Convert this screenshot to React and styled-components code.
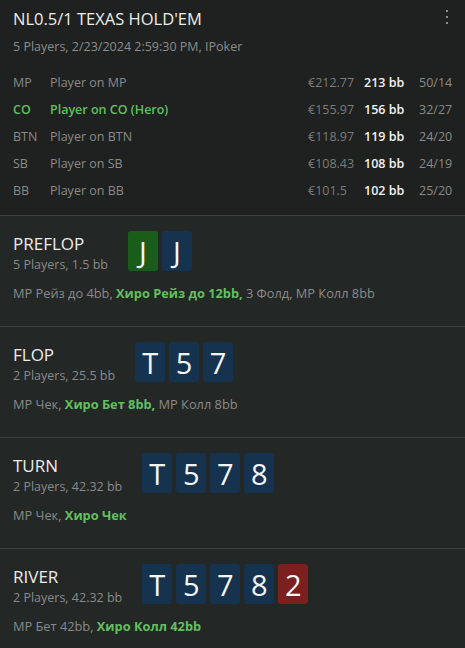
import React from 'react';
import styled, { createGlobalStyle } from 'styled-components';

const GlobalStyle = createGlobalStyle`
  html, body {
    margin: 0;
    padding: 0;
    background: #232726;
  }
  body {
    font-family: "Open Sans", "Noto Sans", sans-serif;
    -webkit-font-smoothing: antialiased;
  }
`;

const Page = styled.div`
  width: 465px;
  min-height: 648px;
  background: #232726;
  color: #8a8a8a;
`;

const Header = styled.header`
  background: #1e211f;
  padding: 6px 12px 11px 13px;
  border-bottom: 1px solid #3c3f3e;
`;

const TitleRow = styled.div`
  display: flex;
  justify-content: space-between;
  align-items: flex-start;
`;

const Title = styled.div`
  font-size: 16.5px;
  line-height: 26px;
  color: #ececec;
`;

const Kebab = styled.svg`
  width: 4px;
  height: 16px;
  margin: 3px 4px 0 0;
`;

const Meta = styled.div`
  font-size: 12.5px;
  line-height: 20px;
  margin-top: 5px;
  color: #8c8c8c;
`;

const Players = styled.div`
  margin-top: 12px;
  display: grid;
  grid-template-columns: 37px 1fr 56px 55px 34px;
  grid-auto-rows: 27px;
  align-items: center;
  font-size: 12.5px;
`;

const Cell = styled.div`
  color: ${p => (p.$hero ? '#63bf5f' : p.$bright ? '#f2f2f2' : '#8a8a8a')};
  font-weight: ${p => (p.$hero || p.$bold ? 600 : 400)};
  white-space: nowrap;
`;

const Stack = styled(Cell)`
  color: #7c7c7c;
`;

const Street = styled.section`
  padding: 15px 12px 24px 13px;
  border-bottom: 1px solid #3c3f3e;
  background: #232726;
  &:last-child {
    border-bottom: none;
  }
`;

const StreetTop = styled.div`
  display: flex;
  align-items: flex-start;
`;

const StreetInfo = styled.div`
  margin-right: 20px;
`;

const StreetName = styled.div`
  font-size: 17px;
  line-height: 24px;
  margin-top: 1px;
  color: #ececec;
`;

const StreetSub = styled.div`
  font-size: 12.5px;
  line-height: 18px;
  color: #8a8a8a;
`;

const Cards = styled.div`
  display: flex;
  gap: 4px;
`;

const Card = styled.div`
  width: 30px;
  height: 40px;
  border-radius: 3px;
  display: flex;
  align-items: center;
  justify-content: center;
  font-size: 29px;
  line-height: 1;
  color: #f6f6f6;
  background: ${p => ({ green: '#1a5d1a', blue: '#15334f', red: '#7c1f1f' }[p.$suit])};
`;

const Actions = styled.div`
  margin-top: 10px;
  font-size: 12.8px;
  line-height: 18px;
  color: #8a8a8a;
`;

const Hero = styled.span`
  color: #63bf5f;
  font-weight: 700;
`;

const players = [
  { pos: 'MP', name: 'Player on MP', stack: '€212.77', bb: '213 bb', stats: '50/14' },
  { pos: 'CO', name: 'Player on CO (Hero)', stack: '€155.97', bb: '156 bb', stats: '32/27', hero: true },
  { pos: 'BTN', name: 'Player on BTN', stack: '€118.97', bb: '119 bb', stats: '24/20' },
  { pos: 'SB', name: 'Player on SB', stack: '€108.43', bb: '108 bb', stats: '24/19' },
  { pos: 'BB', name: 'Player on BB', stack: '€101.5', bb: '102 bb', stats: '25/20' },
];

const streets = [
  {
    name: 'PREFLOP',
    sub: '5 Players, 1.5 bb',
    cards: [['J', 'green'], ['J', 'blue']],
    before: 'MP Рейз до 4bb, ',
    hero: 'Хиро Рейз до 12bb,',
    after: ' 3 Фолд, MP Колл 8bb',
  },
  {
    name: 'FLOP',
    sub: '2 Players, 25.5 bb',
    cards: [['T', 'blue'], ['5', 'blue'], ['7', 'blue']],
    before: 'MP Чек, ',
    hero: 'Хиро Бет 8bb,',
    after: ' MP Колл 8bb',
  },
  {
    name: 'TURN',
    sub: '2 Players, 42.32 bb',
    cards: [['T', 'blue'], ['5', 'blue'], ['7', 'blue'], ['8', 'blue']],
    before: 'MP Чек, ',
    hero: 'Хиро Чек',
    after: '',
  },
  {
    name: 'RIVER',
    sub: '2 Players, 42.32 bb',
    cards: [['T', 'blue'], ['5', 'blue'], ['7', 'blue'], ['8', 'blue'], ['2', 'red']],
    before: 'MP Бет 42bb, ',
    hero: 'Хиро Колл 42bb',
    after: '',
  },
];

export default function App() {
  return (
    <Page>
      <GlobalStyle />
      <Header>
        <TitleRow>
          <Title>NL0.5/1 TEXAS HOLD'EM</Title>
          <Kebab viewBox="0 0 4 16">
            <rect x="1" y="1" width="2" height="2" fill="#8a8a8a" />
            <rect x="1" y="7" width="2" height="2" fill="#8a8a8a" />
            <rect x="1" y="13" width="2" height="2" fill="#8a8a8a" />
          </Kebab>
        </TitleRow>
        <Meta>5 Players, 2/23/2024 2:59:30 PM, IPoker</Meta>
        <Players>
          {players.map(p => (
            <React.Fragment key={p.pos}>
              <Cell $hero={p.hero}>{p.pos}</Cell>
              <Cell $hero={p.hero}>{p.name}</Cell>
              <Stack>{p.stack}</Stack>
              <Cell $bright $bold>{p.bb}</Cell>
              <Cell>{p.stats}</Cell>
            </React.Fragment>
          ))}
        </Players>
      </Header>
      {streets.map(s => (
        <Street key={s.name}>
          <StreetTop>
            <StreetInfo>
              <StreetName>{s.name}</StreetName>
              <StreetSub>{s.sub}</StreetSub>
            </StreetInfo>
            <Cards>
              {s.cards.map(([r, suit], i) => (
                <Card key={i} $suit={suit}>{r}</Card>
              ))}
            </Cards>
          </StreetTop>
          <Actions>
            {s.before}
            <Hero>{s.hero}</Hero>
            {s.after}
          </Actions>
        </Street>
      ))}
    </Page>
  );
}
